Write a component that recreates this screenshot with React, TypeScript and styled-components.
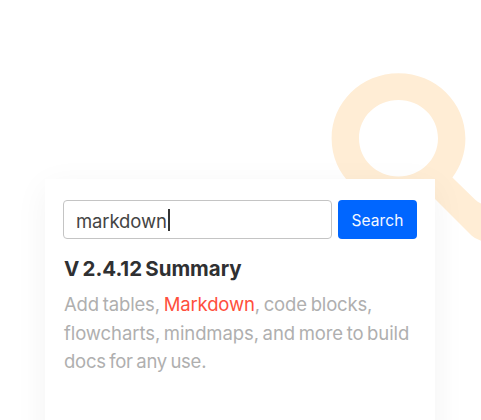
import React from "react";
import styled, { createGlobalStyle } from "styled-components";

const GlobalStyle = createGlobalStyle`
  * { box-sizing: border-box; }
  body { margin: 0; background: #fff; overflow: hidden; }
`;

const Scene = styled.main`
  position: relative;
  width: 481px;
  height: 420px;
  padding: 179px 46px 0 45px;
  overflow: hidden;
  background: #fff;
  font-family: Inter, "Liberation Sans", sans-serif;
`;

const Magnifier = styled.svg`
  position: absolute;
  left: 320px;
  top: 60px;
`;

const Card = styled.section`
  position: relative;
  height: 300px;
  padding: 21px 18px 0;
  background: #fff;
  box-shadow: 0 8px 32px rgba(0, 0, 0, 0.05);
`;

const SearchRow = styled.div`
  display: flex;
  gap: 6px;
  height: 39px;
`;

const Field = styled.div`
  display: flex;
  align-items: center;
  width: 269px;
  padding: 2px 12px 0;
  border: 1px solid #c4c4c4;
  border-radius: 4px;
  color: #444;
  font-size: 18.5px;
  font-weight: 400;
`;

const Caret = styled.span`
  width: 2px;
  height: 22px;
  margin: -2px 0 0 1px;
  background: #333;
`;

const Fit = styled.span<{ $spacing: number; $word?: number }>`
  display: block;
  letter-spacing: ${(p) => p.$spacing}px;
  word-spacing: ${(p) => p.$word ?? 0}px;
  white-space: nowrap;
`;

const Button = styled.button`
  display: flex;
  align-items: center;
  justify-content: center;
  width: 79px;
  padding: 2px 0 0;
  border: 0;
  border-radius: 4px;
  background: #0066ff;
  color: #f4f8ff;
  font: 400 15.5px Inter, "Liberation Sans", sans-serif;
`;

const Title = styled.h2`
  margin: 16px 0 0 1px;
  color: #2f3032;
  font-size: 20.5px;
  font-weight: 700;
  line-height: 28px;
`;

const Summary = styled.p`
  margin: 7px 0 0 1px;
  color: #afafaf;
  font-size: 18.5px;
  font-weight: 400;
  line-height: 28.5px;
`;

const Match = styled.span`
  color: #ff4f3c;
`;

export default function App() {
  return (
    <>
      <GlobalStyle />
      <Scene>
        <Magnifier width="161" height="190" viewBox="0 0 161 190" aria-hidden="true">
          <path
            fill="#ffedd5"
            fillRule="evenodd"
            d="M78.5 13.2C115.5 13.2 145.4 42.3 145.4 78.5C145.4 93 140.7 106.5 132.4 117.6L155 139.5Q158 142.4 162 144V181Q155 179 151.5 175.5L112 136A68 68 0 0 1 78.5 143.8C41.5 143.8 11.6 114.7 11.6 78.5S41.5 13.2 78.5 13.2ZM78.5 40C56.5 40 39 57 39 78.2S56.5 116.4 78.5 116.4S118 99.4 118 78.2S100.5 40 78.5 40Z"
          />
        </Magnifier>
        <Card>
          <SearchRow>
            <Field>
              <Fit $spacing={-0.12}>markdown</Fit>
              <Caret />
            </Field>
            <Button>
              <Fit $spacing={0.1}>Search</Fit>
            </Button>
          </SearchRow>
          <Title>
            <Fit $spacing={-0.04} $word={-1.5}>V 2.4.12 Summary</Fit>
          </Title>
          <Summary>
            <Fit $spacing={-0.16} $word={-1.2}>
              Add tables, <Match>Markdown</Match>, code blocks,
            </Fit>
            <Fit $spacing={-0.08} $word={-1.5}>flowcharts, mindmaps, and more to build</Fit>
            <Fit $spacing={-0.25} $word={-1.5}>docs for any use.</Fit>
          </Summary>
        </Card>
      </Scene>
    </>
  );
}
